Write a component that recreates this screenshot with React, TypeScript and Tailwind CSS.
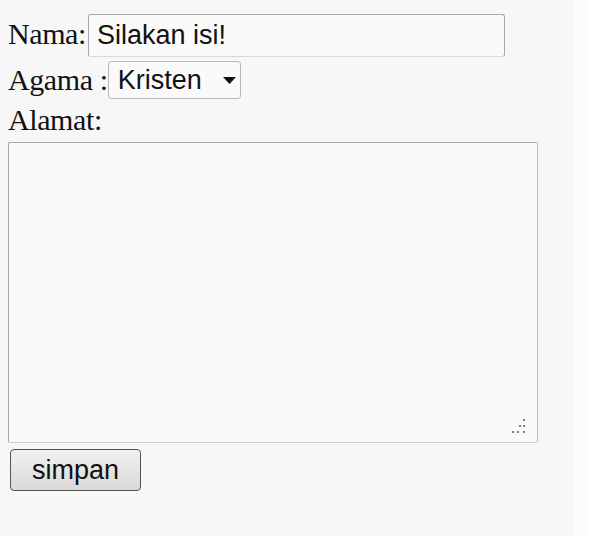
import React from "react";

export default function App() {
  const serif = { fontFamily: '"Liberation Serif", "Times New Roman", serif' };
  return (
    <div className="flex h-[536px] w-[590px] bg-[#fcfcfc]">
      <div className="h-full w-[574px] bg-[#f7f7f7] text-[#111]" style={serif}>
        <div className="pl-2 pt-[14px]">
          <div className="flex h-[43px] items-baseline">
            <span className="text-[30px] leading-none tracking-[-0.4px]" style={serif}>Nama:</span>
            <input
              readOnly
              value="Silakan isi!"
              className="ml-[2px] h-[43px] w-[417px] rounded-[3px] border border-[#a8a8a8] border-b-[#d8d8d8] bg-[#fafafa] px-[8px] text-[27px] text-[#111] outline-none"
              style={{ fontFamily: '"Liberation Sans", Arial, sans-serif' }}
            />
          </div>
          <div className="mt-[4px] flex h-[38px] items-center">
            <span className="text-[30px] leading-none tracking-[-0.4px]" style={serif}>Agama :</span>
            <div
              className="flex h-[38px] w-[133px] items-center rounded-[3px] border border-[#b8b8b8] bg-[#fafafa] pl-[9px] text-[27px]"
              style={{ fontFamily: '"Liberation Sans", Arial, sans-serif' }}
            >
              <span className="leading-none">Kristen</span>
              <svg className="ml-[21px]" width="13" height="7" viewBox="0 0 13 7">
                <path d="M0 0 L13 0 L6.5 7 Z" fill="#111" />
              </svg>
            </div>
          </div>
          <div className="flex h-[43px] items-start pt-[6px]">
            <span className="text-[30px] leading-none tracking-[-0.4px]" style={serif}>Alamat:</span>
          </div>
          <div className="relative h-[301px] w-[530px] rounded-[2px] border border-[#a8a8a8] border-b-[#cfcfcf] border-r-[#bdbdbd] bg-[#fafafa]">
            <svg className="absolute bottom-[8px] right-[11px]" width="15" height="16" viewBox="0 0 15 16">
              <circle cx="13" cy="2" r="1.1" fill="#666" />
              <circle cx="9" cy="8" r="1.1" fill="#666" />
              <circle cx="13" cy="8" r="1.1" fill="#666" />
              <circle cx="2" cy="14" r="1.1" fill="#666" />
              <circle cx="7" cy="14" r="1.1" fill="#666" />
              <circle cx="13" cy="14" r="1.1" fill="#666" />
            </svg>
          </div>
          <button
            className="ml-[2px] mt-[6px] flex h-[42px] w-[131px] items-center justify-center rounded-[4px] border border-[#555] bg-gradient-to-b from-[#f2f2f2] to-[#d9d9d9] text-[27px] leading-none text-[#111]"
            style={{ fontFamily: '"Liberation Sans", Arial, sans-serif' }}
          >
            simpan
          </button>
        </div>
      </div>
    </div>
  );
}
